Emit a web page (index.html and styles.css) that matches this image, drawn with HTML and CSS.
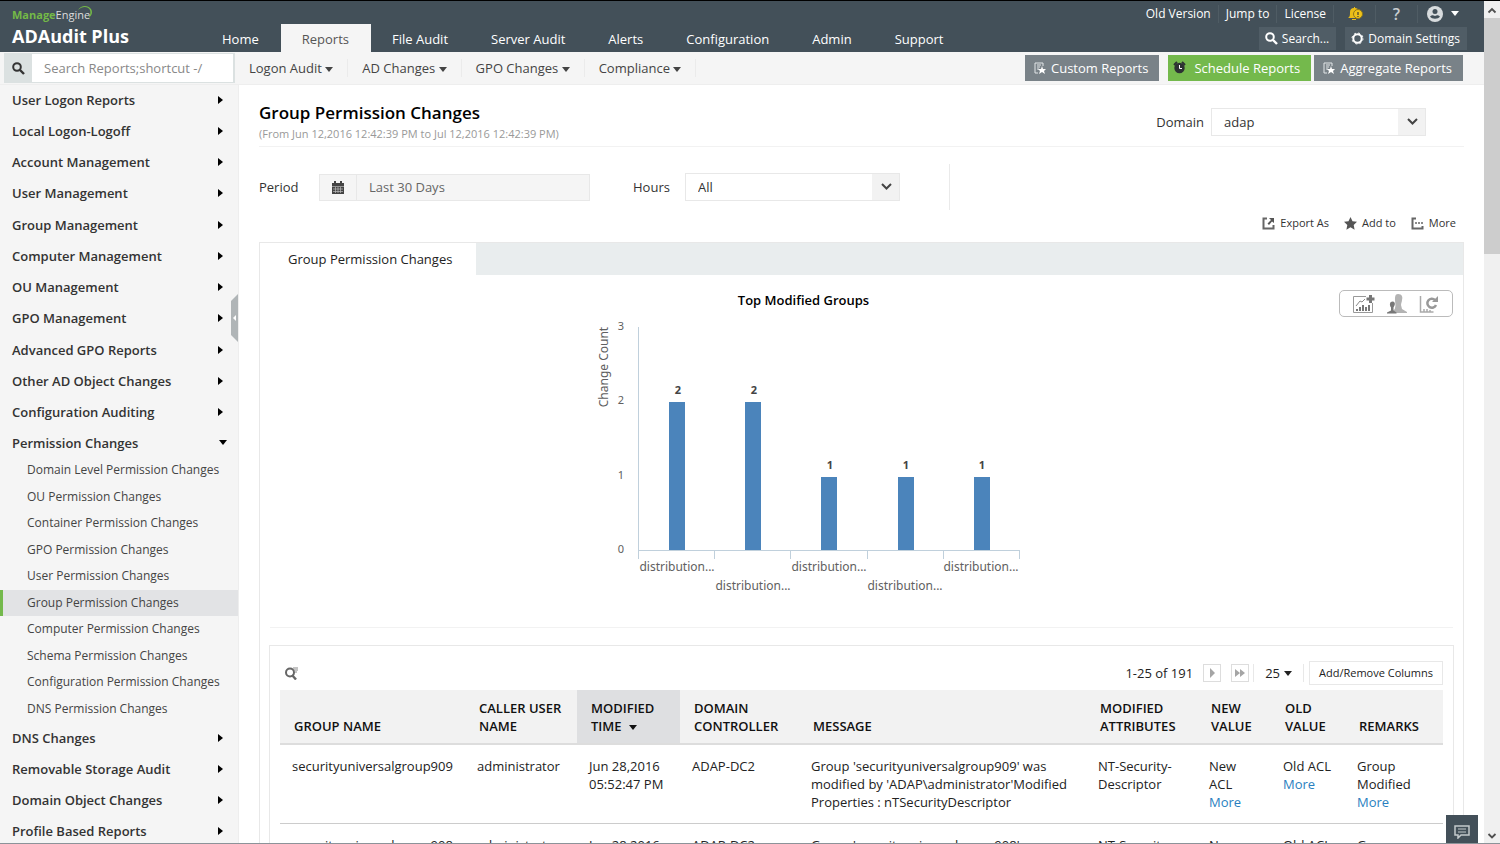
FILE: index.html
```html
<!DOCTYPE html>
<html lang="en">
<head>
    <meta charset="UTF-8">
    <meta name="viewport" content="width=device-width, initial-scale=1.0">
    <title>ADAudit Plus - Group Permission Changes</title>
    <link rel="stylesheet" href="styles.css">
</head>
<body>
    <div class="app">
        <header class="header">
            <div class="brand">
                <div class="brand-top"><b>Manage</b>Engine
                    <svg class="brand-arc" width="16" height="14" viewBox="0 0 16 14"><path d="M1 4C5 0 11 0 13 4c1 3 0 6-2 8 4-2 5-6 3-9C11-1 4-1 1 4z" fill="#74b947"/></svg>
                </div>
                <div class="brand-name">ADAudit Plus</div>
            </div>
            <nav class="nav">
                <a href="#">Home</a>
                <a href="#" class="active">Reports</a>
                <a href="#">File Audit</a>
                <a href="#">Server Audit</a>
                <a href="#">Alerts</a>
                <a href="#">Configuration</a>
                <a href="#">Admin</a>
                <a href="#">Support</a>
            </nav>
            <div class="tools">
                <div class="tools-links">
                    <a href="#">Old Version</a>
                    <a href="#">Jump to</a>
                    <a href="#">License</a>
                    <a href="#" class="tool-icon" aria-label="Notifications">
                        <svg width="16" height="16" viewBox="0 0 16 16"><path d="M1 12c2-1 2-3 2-6 0-2 1-4 4-4V1h1v1c2 0 3 1 4 2v8z" fill="#e9bd18"/><path d="M5 13h4v1H5z" fill="#e9bd18"/><circle cx="11" cy="8" r="4.500" fill="#f0c419" stroke="#8a751f"/><path d="M11 6v3M11 10v1" stroke="#5c5433" stroke-width="1.500"/></svg>
                    </a>
                    <a href="#" class="tool-icon help">?</a>
                    <a href="#" class="tool-icon user" aria-label="Account">
                        <svg width="16" height="16" viewBox="0 0 16 16"><circle cx="8" cy="8" r="8" fill="#d8dcde"/><circle cx="8" cy="5.500" r="2.500" fill="#435059"/><path d="M3 10.500c2-1.500 3-1.500 5-.500 2-1 3-1 5 .500-2 3-8 3-10 0z" fill="#435059"/></svg>
                        <i class="caret"></i>
                    </a>
                </div>
                <div class="tools-buttons">
                    <button type="button">
                        <svg width="13" height="13" viewBox="0 0 13 13"><circle cx="5" cy="5" r="3.800" fill="none" stroke="#fff" stroke-width="2"/><path d="M8 8l4 4" stroke="#fff" stroke-width="2.400"/></svg>
                        Search...
                    </button>
                    <button type="button">
                        <svg width="13" height="13" viewBox="0 0 13 13"><circle cx="6.500" cy="6.500" r="4.200" fill="none" stroke="#fff" stroke-width="2"/><circle cx="6.500" cy="6.500" r="5.500" fill="none" stroke="#fff" stroke-width="1" stroke-dasharray="2 2.320"/></svg>
                        Domain Settings
                    </button>
                </div>
            </div>
        </header>

        <div class="subbar">
            <div class="side-search">
                <label for="sideSearch" aria-label="Search">
                    <svg width="13" height="13" viewBox="0 0 13 13"><circle cx="5" cy="5" r="3.800" fill="none" stroke="#333" stroke-width="2"/><path d="M8 8l4 4" stroke="#333" stroke-width="2.400"/></svg>
                </label>
                <input type="text" id="sideSearch" placeholder="Search Reports;shortcut -/">
            </div>
            <nav class="subnav">
                <a href="#">Logon Audit <i class="caret"></i></a>
                <a href="#">AD Changes <i class="caret"></i></a>
                <a href="#">GPO Changes <i class="caret"></i></a>
                <a href="#">Compliance <i class="caret"></i></a>
            </nav>
            <div class="report-buttons">
                <button type="button" class="custom">
                    <svg width="12" height="12" viewBox="0 0 12 12"><path d="M1 11V1h8v3M3 3h4M3 5h3M3 7h2M1 11h3" fill="none" stroke="#e3e6e8"/><path d="M8 4l1 3h3L10 9l1 3-3-2-3 2 1-3-2-2h3z" fill="#fff"/></svg>
                    Custom Reports
                </button>
                <button type="button" class="schedule">
                    <svg width="14" height="14" viewBox="0 0 14 14"><circle cx="6.500" cy="7" r="5.200" fill="#2d3133"/><path d="M1 4l3-3M12 4L9 1" stroke="#2d3133" stroke-width="2"/><path d="M6.500 4v3.500H9" fill="none" stroke="#fff"/></svg>
                    Schedule Reports
                </button>
                <button type="button" class="aggregate">
                    <svg width="12" height="12" viewBox="0 0 12 12"><path d="M1 11V1h8v3M3 3h4M3 5h3M3 7h2M1 11h3" fill="none" stroke="#e3e6e8"/><path d="M8 4l1 3h3L10 9l1 3-3-2-3 2 1-3-2-2h3z" fill="#fff"/></svg>
                    Aggregate Reports
                </button>
            </div>
        </div>

        <div class="body">
            <aside class="sidebar">
                <ul class="menu">
                    <li><a href="#">User Logon Reports<i class="arrow"></i></a></li>
                    <li><a href="#">Local Logon-Logoff<i class="arrow"></i></a></li>
                    <li><a href="#">Account Management<i class="arrow"></i></a></li>
                    <li><a href="#">User Management<i class="arrow"></i></a></li>
                    <li><a href="#">Group Management<i class="arrow"></i></a></li>
                    <li><a href="#">Computer Management<i class="arrow"></i></a></li>
                    <li><a href="#">OU Management<i class="arrow"></i></a></li>
                    <li><a href="#">GPO Management<i class="arrow"></i></a></li>
                    <li><a href="#">Advanced GPO Reports<i class="arrow"></i></a></li>
                    <li><a href="#">Other AD Object Changes<i class="arrow"></i></a></li>
                    <li><a href="#">Configuration Auditing<i class="arrow"></i></a></li>
                    <li class="open">
                        <a href="#">Permission Changes<i class="caret"></i></a>
                        <ul class="submenu">
                            <li><a href="#">Domain Level Permission Changes</a></li>
                            <li><a href="#">OU Permission Changes</a></li>
                            <li><a href="#">Container Permission Changes</a></li>
                            <li><a href="#">GPO Permission Changes</a></li>
                            <li><a href="#">User Permission Changes</a></li>
                            <li><a href="#" class="current">Group Permission Changes</a></li>
                            <li><a href="#">Computer Permission Changes</a></li>
                            <li><a href="#">Schema Permission Changes</a></li>
                            <li><a href="#">Configuration Permission Changes</a></li>
                            <li><a href="#">DNS Permission Changes</a></li>
                        </ul>
                    </li>
                    <li><a href="#">DNS Changes<i class="arrow"></i></a></li>
                    <li><a href="#">Removable Storage Audit<i class="arrow"></i></a></li>
                    <li><a href="#">Domain Object Changes<i class="arrow"></i></a></li>
                    <li><a href="#">Profile Based Reports<i class="arrow"></i></a></li>
                </ul>
                <button type="button" class="collapse" aria-label="Collapse menu">
                    <svg width="7" height="48" viewBox="0 0 7 48"><path d="M7 0v48L0 41V7z" fill="#b0b5b7"/><path d="M5 21v6l-3-3z" fill="#fff"/></svg>
                </button>
            </aside>

            <main class="main">
                <div class="title-row">
                    <div>
                        <h1>Group Permission Changes</h1>
                        <p class="range">(From Jun 12,2016 12:42:39 PM to Jul 12,2016 12:42:39 PM)</p>
                    </div>
                    <div class="field">
                        <label for="domain">Domain</label>
                        <div class="select">
                            <select id="domain"><option>adap</option></select>
                            <svg width="11" height="8" viewBox="0 0 11 8"><path d="M1 1l4.500 4.500L10 1" fill="none" stroke="#444" stroke-width="2"/></svg>
                        </div>
                    </div>
                </div>

                <div class="filters">
                    <div class="field period">
                        <label for="period">Period</label>
                        <div class="date">
                            <span class="date-icon">
                                <svg width="12" height="13" viewBox="0 0 12 13"><path d="M0 2h12v3H0zM2 0h2v3H2zM8 0h2v3H8zM0 5h12v8H0z" fill="#444"/><path d="M0 5.500h12M1 8h10M1 10.500h10M3.500 6v6M6 6v6M8.500 6v6" stroke="#bbb" stroke-width=".7"/></svg>
                            </span>
                            <input type="text" id="period" value="Last 30 Days" readonly>
                        </div>
                    </div>
                    <div class="field hours">
                        <label for="hours">Hours</label>
                        <div class="select">
                            <select id="hours"><option>All</option></select>
                            <svg width="11" height="8" viewBox="0 0 11 8"><path d="M1 1l4.500 4.500L10 1" fill="none" stroke="#444" stroke-width="2"/></svg>
                        </div>
                    </div>
                </div>

                <div class="actions">
                    <a href="#"><svg width="13" height="13" viewBox="0 0 13 13"><path d="M5 1.500H1.500v10h10V8" fill="none" stroke="#666" stroke-width="2"/><path d="M7 1h5v5l-2-1.500L7 8 5.500 6.500 9 3z" fill="#555"/></svg>Export As</a>
                    <a href="#"><svg width="13" height="13" viewBox="0 0 13 13"><path d="M6.500 0l2 4.300 4.500.500-3.300 3.200.900 4.700-4.100-2.400-4.100 2.400.900-4.700L0 4.800l4.500-.500z" fill="#555"/></svg>Add to</a>
                    <a href="#"><svg width="13" height="13" viewBox="0 0 13 13"><path d="M5 1.500H1.500v10h10V9" fill="none" stroke="#666" stroke-width="2"/><path d="M4 6h9" stroke="#666" stroke-width="1.500" stroke-dasharray="2 1"/></svg>More</a>
                </div>

                <section class="panel">
                    <div class="tabs"><a href="#" class="tab">Group Permission Changes</a></div>

                    <div class="chart-row">
                        <div class="chart">
                            <h2>Top Modified Groups</h2>
                            <svg width="432" height="290" viewBox="0 0 432 290">
                                <g fill="none" stroke="#c0d0dc">
                                    <path d="M50.500 18v224M50 241.500h383M50.500 241v9M126.500 241v9M202.500 241v9M279.500 241v9M355.500 241v9M431.500 241v9"/>
                                </g>
                                <g fill="#4b84bb">
                                    <rect x="81" y="93" width="16" height="148"/>
                                    <rect x="157" y="93" width="16" height="148"/>
                                    <rect x="233" y="168" width="16" height="73"/>
                                    <rect x="310" y="168" width="16" height="73"/>
                                    <rect x="386" y="168" width="16" height="73"/>
                                </g>
                                <g class="tick" text-anchor="end">
                                    <text x="36" y="21">3</text>
                                    <text x="36" y="95">2</text>
                                    <text x="36" y="170">1</text>
                                    <text x="36" y="244">0</text>
                                </g>
                                <text class="axis" text-anchor="middle" transform="translate(20 58) rotate(-90)">Change Count</text>
                                <g class="value" text-anchor="middle">
                                    <text x="90" y="85">2</text>
                                    <text x="166" y="85">2</text>
                                    <text x="242" y="160">1</text>
                                    <text x="318" y="160">1</text>
                                    <text x="394" y="160">1</text>
                                </g>
                                <g class="axis" text-anchor="middle">
                                    <text x="89" y="262">distribution...</text>
                                    <text x="165" y="281">distribution...</text>
                                    <text x="241" y="262">distribution...</text>
                                    <text x="317" y="281">distribution...</text>
                                    <text x="393" y="262">distribution...</text>
                                </g>
                            </svg>
                        </div>
                        <div class="chart-tools">
                            <button type="button" aria-label="Add chart"><svg width="22" height="20" viewBox="0 0 22 20"><path d="M13 2.500H.5v16h19V9" fill="none" stroke="#999"/><path d="M4 17v-2M7 17v-4M10 17v-6M13 17v-4M16 17v-6" stroke="#777" stroke-width="2"/><path d="M3 12l4-5 2 1 3-3" fill="none" stroke="#888"/><path d="M17.500 1v8M13.500 5h8" stroke="#777" stroke-width="3"/></svg></button>
                            <button type="button" aria-label="Users"><svg width="20" height="20" viewBox="0 0 20 20"><path d="M11 0c4 0 5 3 4 6 0 2-1 3-1 5l1 4 5 3v1H4c1-2 4-3 4-5 1-3 0-5 0-8 0-3 0-6 3-6z" fill="#b3b3b3"/><path d="M5.500 7.500c2 0 3 2 2 4l-1 2v3l3 2v1H0v-1l4-2v-3c-2-3-1-6 1.500-6z" fill="#777"/></svg></button>
                            <button type="button" aria-label="Refresh chart"><svg width="20" height="20" viewBox="0 0 20 20"><path d="M1.500 2v16h13M5 18v-3M8 18v-3M11 18v-2" fill="none" stroke="#aaa" stroke-width="1.500"/><path d="M17 11a4.500 4.500 0 1 1-1-5" fill="none" stroke="#999" stroke-width="2.500"/><path d="M19 2v6h-6z" fill="#999"/></svg></button>
                        </div>
                    </div>

                    <div class="card">
                        <div class="table-bar">
                            <button type="button" class="find" aria-label="Search table"><svg width="13" height="13" viewBox="0 0 13 13"><circle cx="5" cy="5.500" r="4" fill="none" stroke="#666" stroke-width="2"/><path d="M7 8l4 4.500" stroke="#666" stroke-width="2.400"/><path d="M8 1h5M9 3h4M10 5h2" stroke="#888"/></svg></button>
                            <span class="count">1-25 of 191</span>
                            <button type="button" class="pager" aria-label="Next page"><svg width="10" height="10" viewBox="0 0 10 10"><path d="M3 0l5 5-5 5z" fill="#a5a5a5"/></svg></button>
                            <button type="button" class="pager" aria-label="Last page"><svg width="10" height="10" viewBox="0 0 10 10"><path d="M0 1l5 4-5 4zM5 1l5 4-5 4z" fill="#a5a5a5"/></svg></button>
                            <button type="button" class="size">25<i class="caret"></i></button>
                            <button type="button" class="columns">Add/Remove Columns</button>
                        </div>
                        <table>
                            <colgroup>
                                <col class="c-group"><col class="c-caller"><col class="c-time"><col class="c-dc"><col><col class="c-attr"><col class="c-value"><col class="c-value"><col class="c-remarks">
                            </colgroup>
                            <thead>
                                <tr>
                                    <th>GROUP NAME</th>
                                    <th>CALLER USER NAME</th>
                                    <th class="sorted">MODIFIED TIME <i class="caret"></i></th>
                                    <th>DOMAIN CONTROLLER</th>
                                    <th>MESSAGE</th>
                                    <th>MODIFIED ATTRIBUTES</th>
                                    <th>NEW VALUE</th>
                                    <th>OLD VALUE</th>
                                    <th>REMARKS</th>
                                </tr>
                            </thead>
                            <tbody>
                                <tr>
                                    <td>securityuniversalgroup909</td>
                                    <td>administrator</td>
                                    <td>Jun 28,2016 05:52:47 PM</td>
                                    <td>ADAP-DC2</td>
                                    <td>Group 'securityuniversalgroup909' was modified by 'ADAP\administrator'Modified Properties : nTSecurityDescriptor</td>
                                    <td>NT-Security-Descriptor</td>
                                    <td>New ACL <a href="#">More</a></td>
                                    <td>Old ACL <a href="#">More</a></td>
                                    <td>Group Modified <a href="#">More</a></td>
                                </tr>
                                <tr>
                                    <td>securityuniversalgroup908</td>
                                    <td>administrator</td>
                                    <td>Jun 28,2016 05:52:47 PM</td>
                                    <td>ADAP-DC2</td>
                                    <td>Group 'securityuniversalgroup908' was modified by 'ADAP\administrator'Modified Properties : nTSecurityDescriptor</td>
                                    <td>NT-Security-Descriptor</td>
                                    <td>New ACL <a href="#">More</a></td>
                                    <td>Old ACL <a href="#">More</a></td>
                                    <td>Group Modified <a href="#">More</a></td>
                                </tr>
                            </tbody>
                        </table>
                    </div>
                </section>
            </main>
        </div>

        <button type="button" class="chat" aria-label="Feedback">
            <svg width="16" height="14" viewBox="0 0 16 14"><path d="M1 1h14v9H7l-3 3v-3H1z" fill="none" stroke="#c3c9cc" stroke-width="1.500"/><path d="M4 4h8M4 7h8" stroke="#c3c9cc"/></svg>
        </button>
    </div>

    <div class="scrollbar">
        <svg width="16" height="17" viewBox="0 0 16 17"><path d="M4.500 11.500L8 8l3.500 3.500" fill="none" stroke="#505050" stroke-width="1.800"/></svg>
        <div class="thumb"></div>
        <svg class="down" width="16" height="17" viewBox="0 0 16 17"><path d="M4.500 8L8 11.500 11.500 8" fill="none" stroke="#505050" stroke-width="1.800"/></svg>
    </div>
</body>
</html>
```
FILE: styles.css
```css
* {
    box-sizing: border-box;
}
body {
    margin: 0;
    height: 100vh;
    display: flex;
    overflow: hidden;
    border-top: 1px solid #000;
    border-bottom: 1px solid #8c9399;
    font-family: 'Open Sans', 'Noto Sans', sans-serif;
    font-size: 13px;
    line-height: 18px;
    color: #333;
    background: #fff;
}
a {
    color: inherit;
    text-decoration: none;
}
button, input, select {
    font: inherit;
    color: inherit;
    border: none;
    border-radius: 0;
    margin: 0;
    padding: 0;
    background: none;
}
button {
    cursor: pointer;
}
svg {
    display: block;
    flex: none;
}
ul {
    list-style: none;
    margin: 0;
    padding: 0;
}
.app {
    position: relative;
    flex: 1;
    min-width: 0;
    display: flex;
    flex-direction: column;
}
.caret {
    display: inline-block;
    border: 4px solid transparent;
    border-top: 5px solid currentColor;
    border-bottom: none;
}

/* header */
.header {
    flex: none;
    height: 51px;
    display: flex;
    background: #435059;
    color: #fff;
}
.brand {
    width: 188px;
    padding: 7px 0 0 12px;
}
.brand-top {
    display: flex;
    font-size: 11px;
    line-height: 14px;
    color: #ddd;
}
.brand-top b {
    color: #74b947;
}
.brand-arc {
    margin-left: -13px;
    margin-top: -2px;
}
.brand-name {
    font-size: 18px;
    font-weight: 700;
    line-height: 28px;
}
.nav {
    display: flex;
    align-items: flex-end;
    padding-left: 13px;
}
.nav a {
    height: 28px;
    padding: 0 22px 0 21px;
    line-height: 30px;
}
.nav .active {
    background: #f5f5f5;
    color: #555;
}
.tools {
    margin-left: auto;
    padding-right: 17px;
    font-size: 12px;
}
.tools-links {
    display: flex;
    justify-content: flex-end;
    align-items: center;
    height: 25px;
}
.tools-links a {
    display: flex;
    justify-content: center;
    align-items: center;
    height: 18px;
    padding: 0 7px;
    border-right: 1px solid #4f5c64;
}
.tools-links .tool-icon {
    width: 42px;
}
.tools-links .help {
    font-size: 16px;
    font-weight: 600;
    color: #c8cdd0;
}
.tools-links .user {
    width: 49px;
    gap: 8px;
    border: none;
}
.tools-buttons {
    display: flex;
    justify-content: flex-end;
    gap: 9px;
    padding-top: 1px;
}
.tools-buttons button {
    display: flex;
    align-items: center;
    gap: 4px;
    height: 23px;
    padding: 0 7px 0 6px;
    background: #505d66;
}

/* second bar */
.subbar {
    flex: none;
    height: 33px;
    display: flex;
    align-items: center;
    background: #f5f5f5;
    border-bottom: 1px solid #eee;
}
.side-search {
    display: flex;
    width: 231px;
    height: 30px;
    margin-left: 4px;
    border: 1px solid #dbe1e1;
    border-right-width: 2px;
}
.side-search label {
    display: flex;
    align-items: center;
    justify-content: center;
    width: 27px;
    background: #dbe1e1;
}
.side-search input {
    flex: 1;
    min-width: 0;
    padding: 0 12px;
    background: #fff;
}
.side-search input::placeholder {
    color: #888;
}
.subnav {
    display: flex;
}
.subnav a {
    padding: 0 14px;
    border-right: 1px solid #ebebeb;
    color: #444;
}
.subnav .caret {
    vertical-align: middle;
}
.report-buttons {
    display: flex;
    margin-left: auto;
    padding-right: 21px;
}
.report-buttons button {
    display: flex;
    align-items: center;
    height: 26px;
    gap: 5px;
    padding: 0 11px 0 9px;
    background: #798288;
    color: #fff;
}
.report-buttons .schedule {
    gap: 7px;
    margin: 0 3px 0 9px;
    padding-left: 5px;
    background: #74b94c;
}

/* sidebar */
.body {
    flex: 1;
    min-height: 0;
    display: flex;
}
.sidebar {
    position: relative;
    flex: none;
    width: 239px;
    overflow: hidden;
    background: #f5f5f5;
    border-right: 1px solid #eee;
}
.menu > li > a {
    display: flex;
    align-items: center;
    justify-content: space-between;
    height: 31px;
    padding: 0 15px 2px 12px;
    font-weight: 600;
}
.menu > li:nth-child(4n) > a {
    height: 32px;
}
.menu > li.open > a {
    height: 29px;
    padding-right: 11px;
    padding-bottom: 0;
}
.menu .caret {
    color: #000;
}
.arrow {
    border: 4px solid transparent;
    border-left: 5px solid #000;
    border-right: none;
}
.submenu {
    padding-bottom: 1px;
    font-size: 12px;
    color: #444;
}
.submenu a {
    display: block;
    height: 26px;
    padding-left: 27px;
    line-height: 26px;
}
.submenu li:nth-child(odd) a {
    height: 27px;
}
.submenu .current {
    padding-left: 24px;
    border-left: 3px solid #74b94c;
    background: #e2e3e5;
}
.collapse {
    position: absolute;
    top: 209px;
    right: 0;
}

/* content */
.main {
    flex: 1;
    min-width: 0;
    padding: 15px 20px 0;
}
h1 {
    margin: 0;
    font-size: 17px;
    font-weight: 600;
    line-height: 26px;
    color: #000;
}
.range {
    margin: 0;
    font-size: 11px;
    line-height: 16px;
    color: #999;
}
.title-row {
    display: flex;
    justify-content: space-between;
    height: 47px;
    border-bottom: 1px solid #f2f2f2;
}
.title-row .field {
    height: 44px;
    padding-right: 38px;
}
.field {
    display: flex;
    align-items: center;
}
.title-row label {
    margin-right: 7px;
}
.select {
    position: relative;
    width: 215px;
    height: 28px;
}
.select select {
    appearance: none;
    width: 100%;
    height: 100%;
    padding: 0 12px;
    border: 1px solid #e8e8e8;
    background: linear-gradient(to left, #f2f2f2 27px, #fff 27px);
}
.select svg {
    position: absolute;
    right: 8px;
    top: 10px;
    pointer-events: none;
}
.filters {
    display: flex;
    width: 691px;
    height: 46px;
    margin-top: 17px;
    border-right: 1px solid #eaeaea;
}
.period label {
    width: 60px;
}
.hours label {
    width: 52px;
}
.hours {
    margin-left: 43px;
}
.date {
    display: flex;
    width: 271px;
    height: 27px;
    border: 1px solid #e8e8e8;
    background: #f5f5f5;
}
.date-icon {
    display: flex;
    align-items: center;
    justify-content: center;
    width: 37px;
    border-right: 1px solid #e8e8e8;
}
.date input {
    flex: 1;
    min-width: 0;
    padding: 0 12px;
    color: #666;
}
.actions {
    display: flex;
    justify-content: flex-end;
    gap: 15px;
    height: 32px;
    padding: 4px 8px 0 0;
    font-size: 11px;
}
.actions a {
    display: flex;
    align-items: center;
    height: 18px;
    gap: 5px;
}
.panel {
    border: 1px solid #e8e8e8;
    color: #222;
}
.tabs {
    display: flex;
    height: 32px;
    background: #e9edee;
}
.tab {
    padding: 0 24px 0 28px;
    line-height: 32px;
    background: #fff;
}
.chart-row {
    display: flex;
    align-items: flex-start;
    height: 353px;
    margin: 0 10px;
    border-bottom: 1px solid #f2f2f2;
}
.chart {
    flex: 1;
    padding: 16px 2px 0 0;
}
.chart h2 {
    margin: 0;
    font-size: 13px;
    font-weight: 600;
    text-align: center;
    color: #000;
}
.chart svg {
    margin: 0 auto;
}
.tick, .axis, .value {
    font-family: 'Noto Sans', 'Open Sans', sans-serif;
    font-size: 12px;
    fill: #606060;
}
.tick {
    font-size: 11px;
}
.value {
    font-size: 11px;
    font-weight: 700;
    fill: #444;
}
.chart-tools {
    display: flex;
    align-items: center;
    justify-content: space-between;
    width: 114px;
    height: 27px;
    margin-top: 15px;
    padding: 0 13px;
    border: 1px solid #bbb;
    border-radius: 5px;
}
.card {
    margin: 17px 9px 0;
    padding: 0 10px;
    border: 1px solid #e8e8e8;
}
.table-bar {
    display: flex;
    align-items: center;
    height: 44px;
    padding-top: 10px;
}
.find {
    margin: 0 auto 0 5px;
}
.pager {
    display: flex;
    align-items: center;
    justify-content: center;
    width: 18px;
    height: 18px;
    margin-left: 10px;
    border: 1px solid #ddd;
}
.size {
    display: flex;
    align-items: center;
    gap: 4px;
    height: 18px;
    margin: 0 5px 0 4px;
    padding: 0 11px;
    border: 1px solid #e8e8e8;
    border-width: 0 1px;
}
.columns {
    height: 24px;
    padding: 0 9px;
    border: 1px solid #e8e8e8;
    font-size: 11px;
}
table {
    width: 100%;
    table-layout: fixed;
    border-collapse: collapse;
}
.c-group {
    width: 185px;
}
.c-caller {
    width: 112px;
}
.c-time {
    width: 103px;
}
.c-dc {
    width: 119px;
}
.c-attr {
    width: 111px;
}
.c-value {
    width: 74px;
}
.c-remarks {
    width: 98px;
}
th {
    height: 54px;
    padding: 9px 10px 8px 14px;
    font-weight: 600;
    text-align: left;
    vertical-align: bottom;
    color: #111;
    background: #f2f2f2;
    border-bottom: 2px solid #ddd;
}
th .caret {
    margin-left: 4px;
    vertical-align: 1px;
}
.sorted {
    background: #dedfe1;
}
td {
    padding: 12px;
    vertical-align: top;
    border-bottom: 1px solid #ccc;
}
td a {
    color: #2a7fc0;
}
.chat {
    position: absolute;
    right: 6px;
    bottom: 0;
    display: flex;
    align-items: center;
    justify-content: center;
    width: 32px;
    height: 28px;
    padding-top: 6px;
    background: #435059;
}

/* scrollbar */
.scrollbar {
    flex: none;
    display: flex;
    flex-direction: column;
    width: 16px;
    background: #f0f0f0;
}
.thumb {
    height: 28%;
    background: #cdcdcd;
}
.down {
    margin-top: auto;
}
```
